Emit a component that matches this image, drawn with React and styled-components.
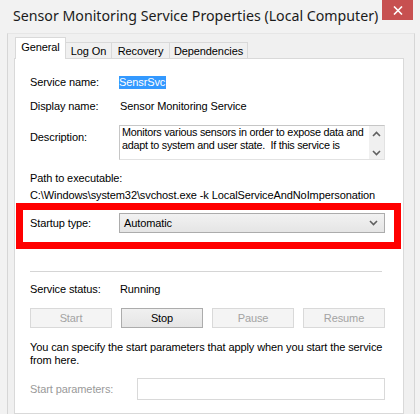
import React from 'react';
import styled, { createGlobalStyle } from 'styled-components';

const GlobalStyle = createGlobalStyle`
	html, body {
		margin: 0;
		padding: 0;
		background: #f2f2f2;
		overflow: hidden;
	}
	* {
		box-sizing: border-box;
	}
`;

const Window = styled.div`
	width: 420px;
	height: 414px;
	background: #f2f2f2;
	display: flex;
	flex-direction: column;
	overflow: hidden;
	font-family: 'Liberation Sans', Arial, sans-serif;
	font-size: 11px;
	color: #000;
`;

const TitleBar = styled.div`
	height: 33px;
	flex-shrink: 0;
	display: flex;
	align-items: flex-start;
	padding-left: 13px;
`;

const Title = styled.div`
	font-family: 'Noto Sans', 'Open Sans', sans-serif;
	font-size: 14.2px;
	line-height: 20px;
	padding-top: 6px;
	color: #1b1b1b;
	white-space: nowrap;
`;

const CloseButton = styled.div`
	margin-left: auto;
	margin-right: 7px;
	width: 31px;
	height: 20px;
	background: #c75050;
	display: flex;
	align-items: center;
	justify-content: center;
`;

const Client = styled.div`
	flex: 1;
	margin: 0 5px 0 7px;
	border-left: 1px solid #d6d6d6;
	border-right: 1px solid #d6d6d6;
	border-top: 1px solid #e6e6e6;
	background: #f0f0f0;
	padding: 3px 10px 0 6px;
	display: flex;
	flex-direction: column;
	overflow: hidden;
`;

const TabStrip = styled.div`
	display: flex;
	align-items: flex-end;
	height: 22px;
	padding-left: 1px;
	position: relative;
	z-index: 1;
	margin-bottom: -1px;
`;

const Tab = styled.div`
	width: ${p => p.w}px;
	height: ${p => (p.active ? 22 : 17)}px;
	background: ${p => (p.active ? '#fff' : '#f0f0f0')};
	border: 1px solid #d9d9d9;
	border-bottom: ${p => (p.active ? 'none' : '1px solid #d9d9d9')};
	margin-left: ${p => (p.first ? 0 : -1)}px;
	display: flex;
	align-items: center;
	justify-content: center;
	padding-bottom: ${p => (p.active ? 3 : 0)}px;
	font-size: 11px;
	letter-spacing: -0.1px;
	color: #000;
`;

const Panel = styled.div`
	flex: 1;
	background: #fff;
	border: 1px solid #d9d9d9;
	padding: 16px 18px 0 15px;
	display: flex;
	flex-direction: column;
`;

const Row = styled.div`
	display: grid;
	grid-template-columns: ${p => p.label || 90}px 1fr;
	align-items: ${p => p.align || 'center'};
	margin-top: ${p => p.mt || 0}px;
	line-height: 14px;
	letter-spacing: -0.1px;
	white-space: nowrap;
`;

const Label = styled.div`
	color: ${p => (p.disabled ? '#9a9a9a' : '#000')};
	padding-top: ${p => p.pt || 0}px;
`;

const Selected = styled.span`
	justify-self: start;
	background: #3399ff;
	color: #fff;
	padding: 0 1px 0 0;
	margin-left: -1px;
	line-height: 13px;
`;

const TextBlock = styled.div`
	margin-top: ${p => p.mt || 0}px;
	line-height: ${p => p.lh || 14}px;
	letter-spacing: -0.1px;
	white-space: ${p => (p.wrap ? 'normal' : 'nowrap')};
`;

const DescBox = styled.div`
	height: 35px;
	margin-left: -1px;
	border: 1px solid #c6c6c6;
	border-bottom-color: #e2e2e2;
	border-right-color: #e2e2e2;
	display: flex;
	overflow: hidden;
`;

const DescText = styled.div`
	flex: 1;
	padding: 0 0 0 2px;
	font-size: 10.8px;
	line-height: 13px;
	letter-spacing: -0.25px;
`;

const ScrollBar = styled.div`
	width: 15px;
	flex-shrink: 0;
	background: #f0f0f0;
	display: flex;
	flex-direction: column;
	align-items: center;
	justify-content: space-between;
	padding: 5px 0 3px;
`;

const Highlight = styled.div`
	margin: 1px -16px 0 -14px;
	border: 7px solid #ff0000;
	padding: 3px 9px 9px 7px;
`;

const Select = styled.div`
	height: 20px;
	margin-left: -1px;
	border: 1px solid #acacac;
	background: linear-gradient(#f2f2f2, #e5e5e5);
	display: flex;
	align-items: center;
	padding: 0 6px 0 4px;
`;

const SelectValue = styled.span`
	flex: 1;
`;

const Separator = styled.div`
	height: 1px;
	background: #d5d5d5;
	margin: 22px 3px 0 0;
`;

const ButtonRow = styled.div`
	display: flex;
	justify-content: space-between;
	margin-top: 12px;
`;

const Button = styled.div`
	width: 82px;
	height: 20px;
	display: flex;
	align-items: center;
	justify-content: center;
	border: 1px solid ${p => (p.disabled ? '#d9d9d9' : '#acacac')};
	background: ${p => (p.disabled ? '#f4f4f4' : 'linear-gradient(#f0f0f0, #e5e5e5)')};
	color: ${p => (p.disabled ? '#a3a3a3' : '#000')};
	letter-spacing: -0.1px;
`;

const Input = styled.div`
	height: 22px;
	border: 1px solid #d9d9d9;
	background: #fff;
`;

const Chevron = ({ up }) => (
	<svg width="9" height="6" viewBox="0 0 9 6">
		<path
			d={up ? 'M1 5 L4.5 1.5 L8 5' : 'M1 1 L4.5 4.5 L8 1'}
			fill="none"
			stroke="#606060"
			strokeWidth="1.6"
		/>
	</svg>
);

const tabs = [
	{ name: 'General', w: 51, active: true },
	{ name: 'Log On', w: 47 },
	{ name: 'Recovery', w: 59 },
	{ name: 'Dependencies', w: 79 },
];

const App = () => {
	return (
		<Window>
			<GlobalStyle />
			<TitleBar>
				<Title>Sensor Monitoring Service Properties (Local Computer)</Title>
				<CloseButton>
					<svg width="10" height="9" viewBox="0 0 10 9">
						<path d="M1 0.5 L9 8.5 M9 0.5 L1 8.5" stroke="#fff" strokeWidth="1.6" />
					</svg>
				</CloseButton>
			</TitleBar>
			<Client>
				<TabStrip>
					{tabs.map((t, i) => (
						<Tab key={t.name} w={t.w} active={t.active} first={i === 0}>
							{t.name}
						</Tab>
					))}
				</TabStrip>
				<Panel>
					<Row>
						<Label>Service name:</Label>
						<Selected>SensrSvc</Selected>
					</Row>
					<Row mt={10}>
						<Label>Display name:</Label>
						<div>Sensor Monitoring Service</div>
					</Row>
					<Row mt={12} align="start">
						<Label pt={5}>Description:</Label>
						<DescBox>
							<DescText>
								<div>Monitors various sensors in order to expose data and</div>
								<div>adapt to system and user state.&nbsp; If this service is</div>
							</DescText>
							<ScrollBar>
								<Chevron up />
								<Chevron />
							</ScrollBar>
						</DescBox>
					</Row>
					<TextBlock mt={11}>Path to executable:</TextBlock>
					<TextBlock mt={3}>
						C:\Windows\system32\svchost.exe -k LocalServiceAndNoImpersonation
					</TextBlock>
					<Highlight>
						<Row>
							<Label>Startup type:</Label>
							<Select>
								<SelectValue>Automatic</SelectValue>
								<Chevron />
							</Select>
						</Row>
					</Highlight>
					<Separator />
					<Row mt={10}>
						<Label>Service status:</Label>
						<div>Running</div>
					</Row>
					<ButtonRow>
						<Button disabled>Start</Button>
						<Button>Stop</Button>
						<Button disabled>Pause</Button>
						<Button disabled>Resume</Button>
					</ButtonRow>
					<TextBlock mt={13} lh={13} wrap>
						You can specify the start parameters that apply when you start the service
						from here.
					</TextBlock>
					<Row mt={11} label={107}>
						<Label disabled>Start parameters:</Label>
						<Input />
					</Row>
				</Panel>
			</Client>
		</Window>
	);
};

export default App;
